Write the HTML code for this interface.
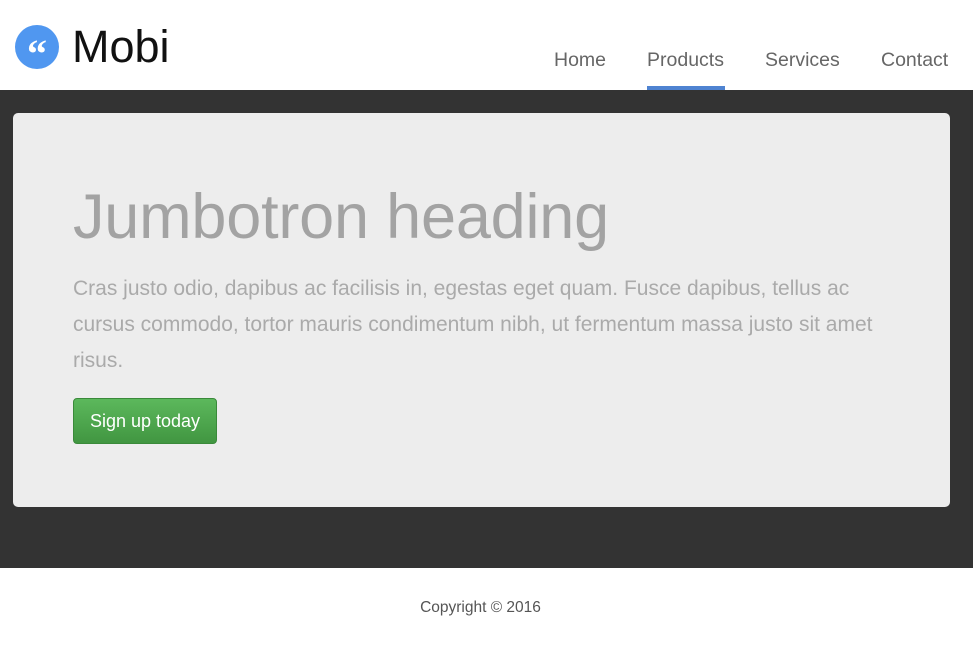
<!DOCTYPE html>
<html><head><style>
body{margin:0;width:973px;height:648px;background:#fff;font-family:"Liberation Sans",Arial,sans-serif;overflow:hidden;position:relative}
.hdr{position:absolute;top:0;left:0;width:973px;height:90px;background:#fff}
.logo{position:absolute;left:15px;top:25px;width:44px;height:44px;border-radius:50%;background:#5097f0;color:#fff;font:bold 40px "Liberation Serif",serif;text-align:center;line-height:58px}
.brand{position:absolute;left:72px;top:21px;font-size:45px;color:#111;font-family:"Liberation Sans",sans-serif}
.nav a{position:absolute;top:49px;font-size:19.5px;color:#666;text-decoration:none}
.ul{position:absolute;left:647px;top:86px;width:78px;height:4px;background:#4f83d1}
.dark{position:absolute;top:90px;left:0;width:973px;height:478px;background:#333}
.jum{position:absolute;top:113px;left:13px;width:937px;height:394px;background:#ededed;border-radius:5px}
h1{position:absolute;left:60px;top:68px;margin:0;font-weight:normal;font-size:63px;color:#a3a3a3;letter-spacing:-0.2px}
p{position:absolute;left:60px;top:158px;margin:0;width:830px;font-size:21px;line-height:36px;color:#aaa}
.btn{position:absolute;left:60px;top:285px;width:142px;height:44px;border:1px solid #3a8a3a;border-radius:4px;background:linear-gradient(#5cb85c,#419641);color:#fff;font-size:18px;text-align:center;line-height:44px}
.foot{position:absolute;top:599px;left:-6px;width:973px;text-align:center;font-size:15.5px;color:#555}
</style></head><body>
<div class="hdr">
<div class="logo">“</div>
<div class="brand">Mobi</div>
<div class="nav"><a style="left:554px">Home</a><a style="left:647px">Products</a><a style="left:765px">Services</a><a style="left:881px">Contact</a></div>
<div class="ul"></div>
</div>
<div class="dark"></div>
<div class="jum">
<h1>Jumbotron heading</h1>
<p>Cras justo odio, dapibus ac facilisis in, egestas eget quam. Fusce dapibus, tellus ac cursus commodo, tortor mauris condimentum nibh, ut fermentum massa justo sit amet risus.</p>
<div class="btn">Sign up today</div>
</div>
<div class="foot">Copyright © 2016</div>
</body></html>
